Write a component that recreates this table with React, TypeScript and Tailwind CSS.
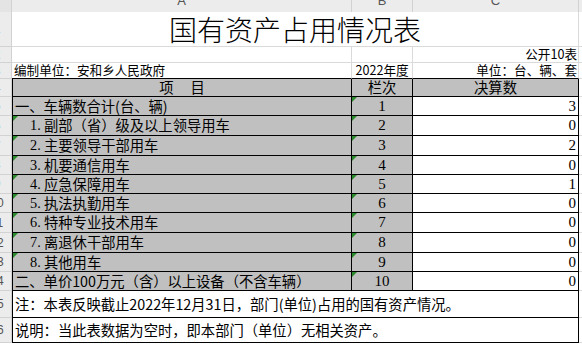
const sans = "font-['Noto_Sans_CJK_SC',sans-serif]"
const digits = "font-['Liberation_Serif','Noto_Sans_CJK_SC',serif]"

type Row = { prefix: string; label: string; no: string; value: string; h: string; flag: boolean; num: number }

const rows: Row[] = [
  { prefix: '', label: '一、车辆数合计(台、辆)', no: '1', value: '3', h: 'h-[19px]', flag: false, num: 5 },
  { prefix: '1.', label: '副部（省）级及以上领导用车', no: '2', value: '0', h: 'h-[20px]', flag: true, num: 6 },
  { prefix: '2.', label: '主要领导干部用车', no: '3', value: '2', h: 'h-[20px]', flag: true, num: 7 },
  { prefix: '3.', label: '机要通信用车', no: '4', value: '0', h: 'h-[19px]', flag: true, num: 8 },
  { prefix: '4.', label: '应急保障用车', no: '5', value: '1', h: 'h-[19px]', flag: true, num: 9 },
  { prefix: '5.', label: '执法执勤用车', no: '6', value: '0', h: 'h-[19px]', flag: true, num: 10 },
  { prefix: '6.', label: '特种专业技术用车', no: '7', value: '0', h: 'h-[20px]', flag: true, num: 11 },
  { prefix: '7.', label: '离退休干部用车', no: '8', value: '0', h: 'h-[20px]', flag: true, num: 12 },
  { prefix: '8.', label: '其他用车', no: '9', value: '0', h: 'h-[19px]', flag: true, num: 13 },
  { prefix: '', label: '二、单价100万元（含）以上设备（不含车辆）', no: '10', value: '0', h: 'h-[19px]', flag: false, num: 14 },
]

function Flag() {
  return <span className="absolute left-0 top-0 h-0 w-0 border-t-[5px] border-r-[5px] border-t-[#2b8a2b] border-r-transparent" />
}

function RowHead({ n }: { n: number }) {
  return (
    <div className="w-[12px] shrink-0 overflow-hidden bg-[#ececec] border-r border-b border-[#d2d2d2] flex items-center">
      <div className="w-[30px] shrink-0 -ml-[18px] text-center text-[12px] leading-none text-[#555] font-['Liberation_Sans',sans-serif]">
        {n}
      </div>
    </div>
  )
}

export default function App() {
  return (
    <div className={`w-[582px] h-[345px] overflow-hidden bg-white text-black ${sans}`}>
      {/* column letters */}
      <div className="flex h-[12px] bg-[#ececec] text-[#555] text-[13px] font-['Liberation_Sans',sans-serif] overflow-hidden">
        <div className="w-[12px] shrink-0 bg-[#e4e4e4] border-r border-[#d2d2d2]" />
        <div className="w-[340px] shrink-0 border-r border-[#d2d2d2] text-center leading-[12px] -mt-[5px]">A</div>
        <div className="w-[61px] shrink-0 border-r border-[#d2d2d2] text-center leading-[12px] -mt-[5px]">B</div>
        <div className="w-[166px] shrink-0 border-r border-[#d2d2d2] text-center leading-[12px] -mt-[5px]">C</div>
        <div className="flex-1" />
      </div>

      {/* title */}
      <div className="flex h-[35px]">
        <RowHead n={1} />
        <div className="w-[567px] shrink-0 border-r border-b border-[#dadada] flex items-center justify-center text-[28px] leading-none font-light">
          国有资产占用情况表
        </div>
        <div className="flex-1 border-b border-[#dadada]" />
      </div>

      <div className="flex h-[16px] text-[12.6px] leading-none">
        <RowHead n={2} />
        <div className="w-[340px] shrink-0 border-r border-b border-[#dadada]" />
        <div className="w-[61px] shrink-0 border-r border-b border-[#dadada]" />
        <div className="w-[166px] shrink-0 border-r border-b border-[#dadada] flex items-end justify-end pr-[1px] pb-[1px]">公开10表</div>
        <div className="flex-1 border-b border-[#dadada]" />
      </div>

      <div className="flex h-[16px] text-[12.6px] leading-none">
        <RowHead n={3} />
        <div className="w-[340px] shrink-0 border-r border-b border-r-[#dadada] border-b-black flex items-end pl-[2px] pb-[1px]">编制单位：安和乡人民政府</div>
        <div className="w-[61px] shrink-0 border-r border-b border-r-[#dadada] border-b-black flex items-end justify-center pb-[1px]">2022年度</div>
        <div className="w-[166px] shrink-0 border-r border-b border-r-[#dadada] border-b-black flex items-end justify-end pr-[1px] pb-[1px]">单位：台、辆、套</div>
        <div className="flex-1 border-b border-[#dadada]" />
      </div>

      {/* header */}
      <div className="flex h-[18px] text-[14.3px] leading-none">
        <RowHead n={4} />
        <div className="w-[340px] shrink-0 bg-[#c0c0c0] border-l border-r border-b border-black flex items-center justify-center gap-[17px]">
          <span>项</span>
          <span>目</span>
        </div>
        <div className="w-[61px] shrink-0 bg-[#c0c0c0] border-r border-b border-black flex items-center justify-center">栏次</div>
        <div className="w-[166px] shrink-0 bg-[#c0c0c0] border-r border-b border-black flex items-center justify-center">决算数</div>
        <div className="flex-1 border-b border-[#dadada]" />
      </div>

      {rows.map(r => (
        <div key={r.no} className={`flex ${r.h} text-[14.3px] leading-none`}>
          <RowHead n={r.num} />
          <div
            className={`relative w-[340px] shrink-0 bg-[#c0c0c0] border-l border-r border-b border-black flex items-center whitespace-nowrap ${
              r.prefix ? 'pl-[17px]' : 'pl-[2px]'
            }`}
          >
            {r.flag && <Flag />}
            {r.prefix && <span className={`inline-block w-[14px] ${digits}`}>{r.prefix}</span>}
            {r.label}
          </div>
          <div className={`relative w-[61px] shrink-0 bg-[#c0c0c0] border-r border-b border-black flex items-center justify-center text-[15px] ${digits}`}>
            <Flag />
            {r.no}
          </div>
          <div className={`w-[166px] shrink-0 bg-white border-r border-b border-black flex items-center justify-end pr-[2px] text-[15px] ${digits}`}>
            {r.value}
          </div>
          <div className="flex-1 border-b border-[#dadada]" />
        </div>
      ))}

      <div className="flex h-[27px] text-[14.3px] leading-none">
        <RowHead n={15} />
        <div className="w-[567px] shrink-0 border-l border-r border-b border-black flex items-center pl-[2px] whitespace-nowrap">
          注：本表反映截止2022年12月31日，部门(单位)占用的国有资产情况。
        </div>
        <div className="flex-1 border-b border-[#dadada]" />
      </div>

      <div className="flex h-[25px] text-[14.3px] leading-none">
        <RowHead n={16} />
        <div className="w-[567px] shrink-0 border-l border-r border-b border-black flex items-center pl-[2px] whitespace-nowrap">
          说明：当此表数据为空时，即本部门（单位）无相关资产。
        </div>
        <div className="flex-1 border-b border-[#dadada]" />
      </div>
    </div>
  )
}
